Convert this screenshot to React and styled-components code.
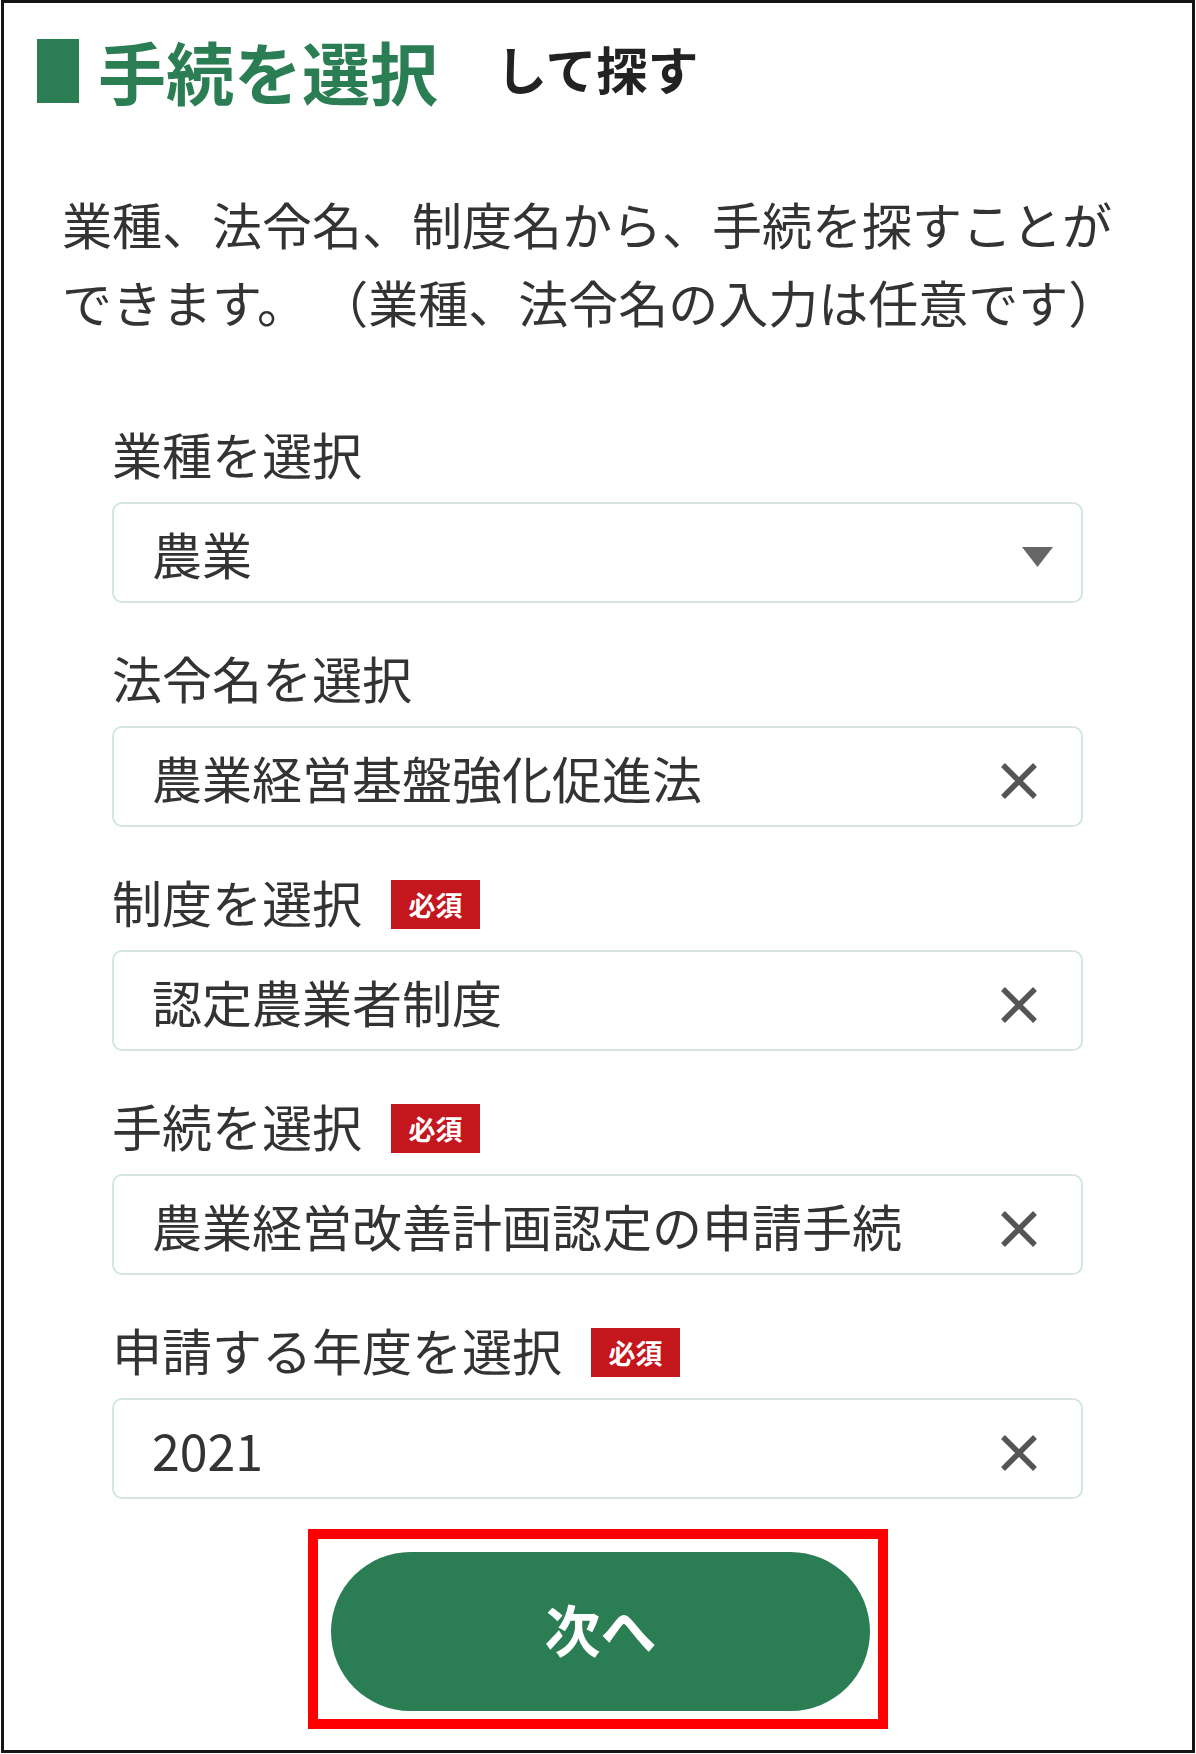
import React from 'react';
import styled, { createGlobalStyle } from 'styled-components';

const GlobalStyle = createGlobalStyle`
  body {
    margin: 0;
    background: #fff;
    font-family: "Noto Sans CJK JP", "Noto Sans", sans-serif;
    color: #333;
  }
`;

const Frame = styled.div`
  box-sizing: border-box;
  width: 1194px;
  height: 1753px;
  margin-left: 1px;
  border: 3px solid #151515;
  padding: 36px 0 0 33px;
  display: flex;
  flex-direction: column;
`;

const TitleRow = styled.div`
  display: flex;
  align-items: center;
  height: 64px;
`;

const TitleBar = styled.span`
  width: 42px;
  height: 64px;
  background: #2b7d54;
  margin-right: 19px;
`;

const TitleMain = styled.span`
  font-size: 68px;
  line-height: 64px;
  font-weight: 700;
  color: #2b7d54;
`;

const TitleSub = styled.span`
  font-size: 51px;
  line-height: 64px;
  font-weight: 700;
  color: #222;
  margin-left: 58px;
  position: relative;
  top: -3px;
`;

const Description = styled.p`
  margin: 81px 0 0 25px;
  font-size: 50px;
  line-height: 78px;
  color: #333;
  white-space: pre;
`;

const Form = styled.div`
  width: 971px;
  margin: 83px 0 0 75px;
  display: flex;
  flex-direction: column;
  gap: 44px;
`;

const Field = styled.div`
  display: flex;
  flex-direction: column;
  gap: 19px;
`;

const LabelRow = styled.div`
  display: flex;
  align-items: center;
  height: 60px;
`;

const Label = styled.span`
  font-size: 50px;
  line-height: 60px;
  color: #333;
`;

const Badge = styled.span`
  margin-left: 29px;
  width: 89px;
  height: 49px;
  background: #c4161d;
  color: #fff;
  font-size: 27px;
  font-weight: 700;
  display: flex;
  align-items: center;
  justify-content: center;
  position: relative;
  top: 3px;
`;

const Box = styled.div`
  box-sizing: border-box;
  height: 101px;
  border: 2px solid #d5e6df;
  border-radius: 10px;
  padding: 0 43px 0 38px;
  display: flex;
  align-items: center;
  justify-content: space-between;
`;

const Value = styled.span`
  font-size: 50px;
  line-height: 60px;
  color: #333;
`;

const IconWrap = styled.span`
  display: flex;
  align-items: center;
  margin-right: ${({ $shift }) => $shift || 0}px;
  position: relative;
  top: 4px;
`;

const ButtonArea = styled.div`
  display: flex;
  justify-content: center;
  margin-top: 30px;
`;

const Highlight = styled.div`
  box-sizing: border-box;
  width: 580px;
  height: 200px;
  margin-left: -33px;
  border: 10px solid #ff0000;
  padding: 13px 8px 8px 13px;
`;

const NextButton = styled.button`
  width: 539px;
  height: 159px;
  border: none;
  border-radius: 80px;
  background: #2b7d54;
  color: #fff;
  font-family: "Noto Sans CJK JP", "Noto Sans", sans-serif;
  font-size: 56px;
  font-weight: 700;
  cursor: pointer;
  display: flex;
  align-items: center;
  justify-content: center;
  padding: 0 0 8px;
`;

const ClearIcon = () => (
  <svg width="38" height="38" viewBox="0 0 38 38">
    <path d="M3 3 L35 35 M35 3 L3 35" stroke="#555" strokeWidth="5.5" fill="none" />
  </svg>
);

const CaretIcon = () => (
  <svg width="31" height="20" viewBox="0 0 31 20">
    <polygon points="0,0 31,0 15.5,20" fill="#666" />
  </svg>
);

const fields = [
  { label: '業種を選択', value: '農業', type: 'select' },
  { label: '法令名を選択', value: '農業経営基盤強化促進法', type: 'clear' },
  { label: '制度を選択', value: '認定農業者制度', type: 'clear', required: true },
  { label: '手続を選択', value: '農業経営改善計画認定の申請手続', type: 'clear', required: true },
  { label: '申請する年度を選択', value: '2021', type: 'clear', required: true },
];

export default function App() {
  return (
    <>
      <GlobalStyle />
      <Frame>
        <TitleRow>
          <TitleBar />
          <TitleMain>手続を選択</TitleMain>
          <TitleSub>して探す</TitleSub>
        </TitleRow>
        <Description>
          {'業種、法令名、制度名から、手続を探すことが\nできます。 （業種、法令名の入力は任意です）'}
        </Description>
        <Form>
          {fields.map((f) => (
            <Field key={f.label}>
              <LabelRow>
                <Label>{f.label}</Label>
                {f.required && <Badge>必須</Badge>}
              </LabelRow>
              <Box>
                <Value>{f.value}</Value>
                {f.type === 'select' ? (
                  <IconWrap $shift={-15}>
                    <CaretIcon />
                  </IconWrap>
                ) : (
                  <IconWrap>
                    <ClearIcon />
                  </IconWrap>
                )}
              </Box>
            </Field>
          ))}
        </Form>
        <ButtonArea>
          <Highlight>
            <NextButton type="button">次へ</NextButton>
          </Highlight>
        </ButtonArea>
      </Frame>
    </>
  );
}
